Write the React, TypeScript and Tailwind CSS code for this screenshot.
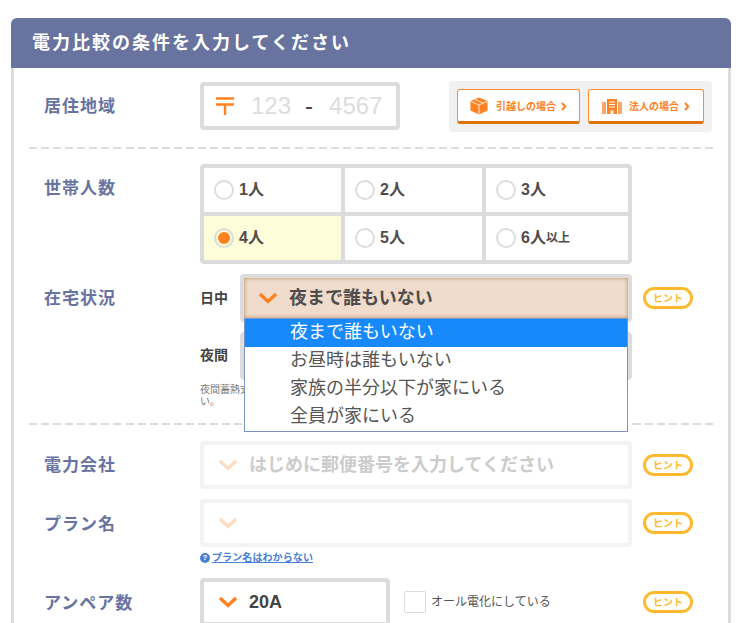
import type { ReactNode } from "react";

const font = "font-['Liberation_Sans','Noto_Sans_CJK_JP',sans-serif]";

function Chevron({ faded = false }: { faded?: boolean }) {
  return (
    <svg width="18" height="12" viewBox="0 0 18 12" aria-hidden="true" className="shrink-0">
      <path
        d="M1 2 9 9.5 17 2"
        fill="none"
        stroke={faded ? "#ffdcc0" : "#ff8122"}
        strokeWidth="3.4"
      />
    </svg>
  );
}

function Hint() {
  return (
    <span className="flex h-[22px] w-[50px] shrink-0 items-center justify-center rounded-full border-[3px] border-[#ffb92e] text-[10px] font-bold text-[#ffb92e]">
      ヒント
    </span>
  );
}

function Dashed() {
  return (
    <div className="mx-[15px] h-[2px] bg-[repeating-linear-gradient(90deg,#dcdcdc_0_8px,transparent_8px_12.07px)]" />
  );
}

function Label({ children }: { children: ReactNode }) {
  return (
    <div className="w-[186px] shrink-0 pl-[30px] text-[17px] font-bold tracking-[1px] text-[#68739f]">
      {children}
    </div>
  );
}

function Select({
  children,
  faded = false,
  width = "w-[432px]",
}: {
  children?: ReactNode;
  faded?: boolean;
  width?: string;
}) {
  return (
    <div
      className={`flex h-[48px] ${width} shrink-0 items-center gap-[12px] rounded-[4px] border-[4px] pl-[15px] text-[18px] font-bold ${
        faded ? "border-[#f3f3f3] text-[#cccccc]" : "border-[#dcdcdc] text-[#444444]"
      }`}
    >
      <Chevron faded={faded} />
      <span>{children}</span>
    </div>
  );
}

function Radio({ label, suffix, checked = false }: { label: string; suffix?: string; checked?: boolean }) {
  return (
    <div className={`flex items-center pl-[10px] ${checked ? "bg-[#fefdd9]" : "bg-white"}`}>
      <span className="flex h-[20px] w-[20px] shrink-0 items-center justify-center rounded-full border-2 border-[#dcdcdc]">
        {checked ? <span className="h-[12px] w-[12px] rounded-full bg-[#ff8122]" /> : null}
      </span>
      <span className="ml-[5px] text-[16px] font-bold text-[#504c4c]">{label}</span>
      {suffix ? <span className="text-[12px] font-bold text-[#504c4c]">{suffix}</span> : null}
    </div>
  );
}

function BoxIcon() {
  return (
    <svg width="18" height="18" viewBox="0 0 18 18" aria-hidden="true" className="shrink-0">
      <path d="M9 0.5 17.5 4v9.5L9 17.5 0.5 13.5V4Z" fill="#ff8122" />
      <path d="M1 4.5 9 8l8-3.5M9 8v9M5 2.5l8 3.5" fill="none" stroke="#ffffff" strokeWidth="0.8" />
    </svg>
  );
}

function BuildingIcon() {
  return (
    <svg width="20" height="15" viewBox="0 0 20 15" aria-hidden="true" className="shrink-0">
      <rect x="0" y="3" width="4" height="12" fill="#ffa566" />
      <rect x="16" y="3" width="4" height="12" fill="#ffa566" />
      <rect x="5" y="0" width="10" height="15" fill="#ff8122" />
      <path d="M7 3h6M7 5.5h6M7 8h6" stroke="#ffffff" strokeWidth="1" />
      <rect x="8.5" y="11.5" width="3" height="3.5" fill="#ffffff" />
    </svg>
  );
}

function MoveButton({ icon, label, width, gap }: { icon: ReactNode; label: string; width: string; gap: string }) {
  return (
    <div
      className={`flex h-[35px] ${width} items-center justify-center ${gap} rounded-[3px] border border-b-[3px] border-[#ff8a2a] border-b-[#e2720f] bg-white pt-[1px] text-[10px] font-bold text-[#ff8122]`}
    >
      {icon}
      <span className="flex items-center gap-[5px]">
        {label}
        <svg width="6" height="9" viewBox="0 0 6 9" aria-hidden="true">
          <path d="M1 1l3.2 3.5L1 8" fill="none" stroke="#ff8122" strokeWidth="2" />
        </svg>
      </span>
    </div>
  );
}

const dayOptions = ["夜まで誰もいない", "お昼時は誰もいない", "家族の半分以下が家にいる", "全員が家にいる"];

export default function App() {
  return (
    <div className={`h-[623px] w-[747px] overflow-hidden bg-white pt-[18px] ${font}`}>
      <div className="mx-[11px] w-[720px]">
        <h1 className="flex h-[50px] items-center rounded-t-[6px] bg-[#68739f] pl-[21px] text-[18px] font-bold tracking-[2px] text-white">
          電力比較の条件を入力してください
        </h1>

        <div className="border-x-[3px] border-[#dcdcdc] bg-white">
          <section className="flex items-center pb-[15px] pr-[16px] pt-[13px]">
            <Label>居住地域</Label>
            <div className="mb-[2px] flex h-[48px] w-[200px] items-center rounded-[4px] border-[4px] border-[#dcdcdc] pl-[12px] text-[24px] text-[#dddddd]">
              <svg width="18" height="18" viewBox="0 0 18 18" aria-hidden="true" className="shrink-0">
                <path d="M0 1.5h18M0 7.5h18M9 7.5V18" fill="none" stroke="#ff8122" strokeWidth="2.4" />
              </svg>
              <span className="ml-[17px]">123</span>
              <span className="ml-[14px] text-[#444444]">-</span>
              <span className="ml-[16px]">4567</span>
            </div>
            <div className="ml-auto flex h-[51px] w-[263px] items-center gap-[8px] rounded-[4px] bg-[#f1f1f1] pl-[8px]">
              <MoveButton icon={<BoxIcon />} label="引越しの場合" width="w-[123px]" gap="gap-[8px]" />
              <MoveButton icon={<BuildingIcon />} label="法人の場合" width="w-[116px]" gap="gap-[7px]" />
            </div>
          </section>

          <Dashed />

          <section className="pb-[15px] pt-[15px]">
            <div className="flex">
              <Label>
                <div className="pt-[12px]">世帯人数</div>
              </Label>
              <div className="grid h-[100px] w-[432px] grid-cols-[137px_137px_1fr] grid-rows-2 gap-[4px] rounded-[4px] border-[4px] border-[#dcdcdc] bg-[#dcdcdc]">
                <Radio label="1人" />
                <Radio label="2人" />
                <Radio label="3人" />
                <Radio label="4人" checked />
                <Radio label="5人" />
                <Radio label="6人" suffix="以上" />
              </div>
            </div>

            <div className="mt-[10px] flex">
              <Label>
                <div className="pt-[12px]">在宅状況</div>
              </Label>
              <div className="relative w-[497px]">
                <div className="flex items-center">
                  <span className="w-[40px] shrink-0 text-[14px] font-bold text-[#444444]">日中</span>
                  <div className="flex h-[48px] w-[392px] shrink-0 items-center rounded-[4px] border-[4px] border-[#dcdcdc]">
                    <div className="flex h-full w-full items-center gap-[12px] bg-[#efdccc] pl-[15px] text-[18px] font-bold text-[#504c4c] shadow-[inset_0_0_4px_#b88d5e]">
                      <Chevron />
                      <span>夜まで誰もいない</span>
                    </div>
                  </div>
                  <span className="ml-[11px]">
                    <Hint />
                  </span>
                </div>

                <div className="mt-[10px] flex items-center">
                  <span className="w-[40px] shrink-0 pb-[2px] text-[14px] font-bold text-[#444444]">夜間</span>
                  <Select width="w-[392px]">夜まで誰もいない</Select>
                </div>

                <p className="mt-[4px] w-[432px] text-[10px] leading-[12px] text-[#777777]">
                  夜間蓄熱式機器をご利用の方は、夜間の在宅状況に関らず「全員が家にいる」を選択してください。
                </p>

                <ul className="absolute left-[44px] top-[44px] w-[384px] border border-[#7d92c9] bg-white text-[18px] leading-[27px] text-[#555555]">
                  {dayOptions.map((option, i) => (
                    <li key={option} className={`h-[28px] pl-[45px] ${i === 0 ? "bg-[#1789fb] text-white" : ""}`}>
                      {option}
                    </li>
                  ))}
                </ul>
              </div>
            </div>
          </section>

          <Dashed />

          <section className="pt-[16px]">
            <div className="flex items-center">
              <Label>
                <div className="pt-[1px]">電力会社</div>
              </Label>
              <Select faded>はじめに郵便番号を入力してください</Select>
              <span className="ml-[11px]">
                <Hint />
              </span>
            </div>

            <div className="mt-[10px] flex items-center">
              <Label>
                <div className="pt-[3px]">プラン名</div>
              </Label>
              <Select faded />
              <span className="ml-[11px]">
                <Hint />
              </span>
            </div>

            <div className="ml-[186px] mt-[4px] flex h-[13px] items-center gap-[2px]">
              <span className="flex h-[10px] w-[10px] items-center justify-center rounded-full bg-[#4a7fd6] text-[8px] font-bold leading-none text-white">
                ?
              </span>
              <span className="text-[10px] font-bold tracking-[0.1px] text-[#4a7fd6] underline">プラン名はわからない</span>
            </div>

            <div className="mt-[14px] flex items-center">
              <Label>
                <div className="pt-[3px]">アンペア数</div>
              </Label>
              <Select width="w-[190px]">20A</Select>
              <span className="ml-[14px] h-[22px] w-[22px] shrink-0 rounded-[2px] border border-[#dcdcdc] bg-white" />
              <span className="ml-[5px] w-[212px] text-[12px] text-[#555555]">オール電化にしている</span>
              <Hint />
            </div>
          </section>
        </div>
      </div>
    </div>
  );
}
